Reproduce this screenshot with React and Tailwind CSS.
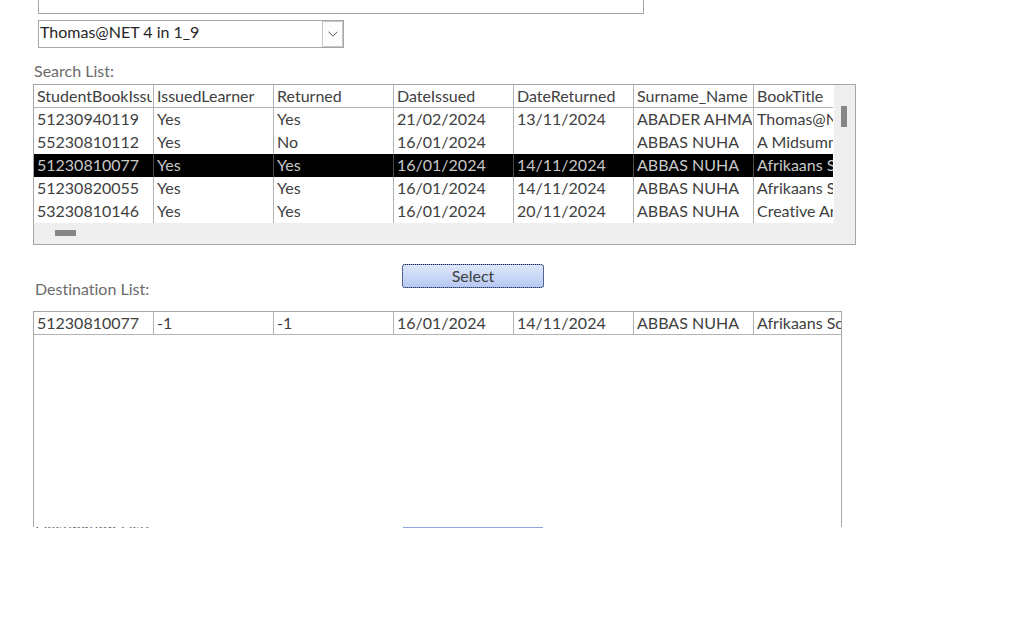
import { useState } from 'react';

const columns = [
  'StudentBookIssueID',
  'IssuedLearner',
  'Returned',
  'DateIssued',
  'DateReturned',
  'Surname_Name',
  'BookTitle',
];

const searchRows = [
  ['51230940119', 'Yes', 'Yes', '21/02/2024', '13/11/2024', 'ABADER AHMAD', 'Thomas@NET 4 in 1_9'],
  ['55230810112', 'Yes', 'No', '16/01/2024', '', 'ABBAS NUHA', 'A Midsummer'],
  ['51230810077', 'Yes', 'Yes', '16/01/2024', '14/11/2024', 'ABBAS NUHA', 'Afrikaans Sonder'],
  ['51230820055', 'Yes', 'Yes', '16/01/2024', '14/11/2024', 'ABBAS NUHA', 'Afrikaans Sonder'],
  ['53230810146', 'Yes', 'Yes', '16/01/2024', '20/11/2024', 'ABBAS NUHA', 'Creative Arts'],
];

const destinationRows = [
  ['51230810077', '-1', '-1', '16/01/2024', '14/11/2024', 'ABBAS NUHA', 'Afrikaans Sonder'],
];

const cellBase = 'h-[23px] p-0 pr-px pl-[3px] text-left align-top font-normal leading-[22px]';

function ListColumns() {
  return (
    <colgroup>
      {columns.map((name, idx) => (
        <col key={name} className={idx === columns.length - 1 ? '' : 'w-[120px]'} />
      ))}
    </colgroup>
  );
}

function CellText({ children }) {
  return <div className="overflow-hidden whitespace-nowrap">{children}</div>;
}

function SearchList({ selected, onSelect }) {
  return (
    <div className="w-full max-w-[823px] border border-[#a6a6a6]">
      <div className="flex">
        <div className="min-w-0 flex-1 overflow-hidden pr-px">
          <table
            aria-labelledby="search-label"
            className="w-full table-fixed border-separate border-spacing-0"
          >
            <ListColumns />
            <thead>
              <tr>
                {columns.map((name) => (
                  <th
                    key={name}
                    scope="col"
                    className={`${cellBase} border-r border-b border-[#b4b4b4] last:border-r-0 last:pr-0`}
                  >
                    <CellText>{name}</CellText>
                  </th>
                ))}
              </tr>
            </thead>
            <tbody>
              {searchRows.map((row, rowIdx) => {
                const active = rowIdx === selected;
                return (
                  <tr
                    key={row[0]}
                    onClick={() => onSelect(rowIdx)}
                    className={active ? 'bg-black text-[#c8c8c8]' : ''}
                  >
                    {row.map((value, idx) => (
                      <td
                        key={columns[idx]}
                        className={`${cellBase} border-r last:border-r-0 last:pr-0 ${
                          active ? 'border-[#4b4b4b]' : 'border-[#b4b4b4]'
                        }`}
                      >
                        <CellText>{value}</CellText>
                      </td>
                    ))}
                  </tr>
                );
              })}
            </tbody>
          </table>
        </div>
        {/* Vertical scroll track */}
        <div className="w-[21px] shrink-0 bg-[#efefef] pt-[21px] pl-[7px]">
          <div className="h-[21px] w-[6px] bg-[#868686]" />
        </div>
      </div>
      {/* Horizontal scroll track */}
      <div className="h-[21px] bg-[#efefef] pt-[7px] pl-[21px]">
        <div className="h-[6px] w-[21px] bg-[#868686]" />
      </div>
    </div>
  );
}

function DestinationList() {
  return (
    <div className="min-h-[216px] w-full max-w-[809px] overflow-hidden border border-b-0 border-[#a6a6a6]">
      <table
        aria-labelledby="destination-label"
        className="w-full table-fixed border-separate border-spacing-0"
      >
        <ListColumns />
        <tbody>
          {destinationRows.map((row) => (
            <tr key={row[0]}>
              {row.map((value, idx) => (
                <td
                  key={columns[idx]}
                  className={`${cellBase} border-r border-b border-[#b4b4b4] last:border-r-0 last:pr-0`}
                >
                  <CellText>{value}</CellText>
                </td>
              ))}
            </tr>
          ))}
        </tbody>
      </table>
    </div>
  );
}

export default function App() {
  const [filter, setFilter] = useState('');
  const [selected, setSelected] = useState(2);

  return (
    <main className="min-h-screen bg-white pl-[33px] font-['Lato',sans-serif] text-base text-[#404040] [font-variant-ligatures:none]">
      <div className="pl-[5px]">
        <input
          type="text"
          aria-label="Search"
          value={filter}
          onChange={(e) => setFilter(e.target.value)}
          className="block h-[14px] w-full max-w-[606px] border border-t-0 border-[#a6a6a6] outline-none"
        />
        <div className="mt-[6px] grid w-full max-w-[306px] border border-[#a6a6a6]">
          <select
            aria-label="Book title"
            className="col-start-1 row-start-1 h-[26px] w-full appearance-none bg-white pb-1 pl-px leading-[22px] text-[#262626] outline-none"
          >
            <option>Thomas@NET 4 in 1_9</option>
          </select>
          <span className="pointer-events-none col-start-1 row-start-1 flex w-[21px] items-center justify-center justify-self-end border border-[#c6c6c6] bg-[#fdfdfd]">
            <svg width="10" height="6" viewBox="0 0 10 6" fill="none" stroke="#555555">
              <path d="M0.5 0.7 L5 5.2 L9.5 0.7" />
            </svg>
          </span>
        </div>
      </div>

      <h2 id="search-label" className="mt-3 pb-[2px] pl-px leading-[22px] text-[#6b6b6b]">
        Search List:
      </h2>
      <SearchList selected={selected} onSelect={setSelected} />

      <div className="mt-[19px] flex items-start pb-[9px] pl-[2px]">
        <h2 id="destination-label" className="mt-[14px] w-[367px] pb-[2px] leading-[22px] text-[#6b6b6b]">
          Destination List:
        </h2>
        <button
          type="button"
          className="h-6 w-[142px] rounded-[3px] border border-[#8aa4e0] bg-linear-to-b from-[#e0e8fb] to-[#b5c7f2] bg-origin-border leading-[22px] outline-1 -outline-offset-1 outline-[#1c2440] outline-dotted"
        >
          Select
        </button>
      </div>
      <DestinationList />

      {/* Top edge of the next section, cut off by the form */}
      <div aria-hidden="true" className="flex h-px items-center overflow-hidden pl-[2px]">
        <span className="w-[368px] leading-6 text-[#6b6b6b]">Destination List:</span>
        <span className="h-px w-[140px] bg-[#8fa4dc]" />
      </div>
    </main>
  );
}
